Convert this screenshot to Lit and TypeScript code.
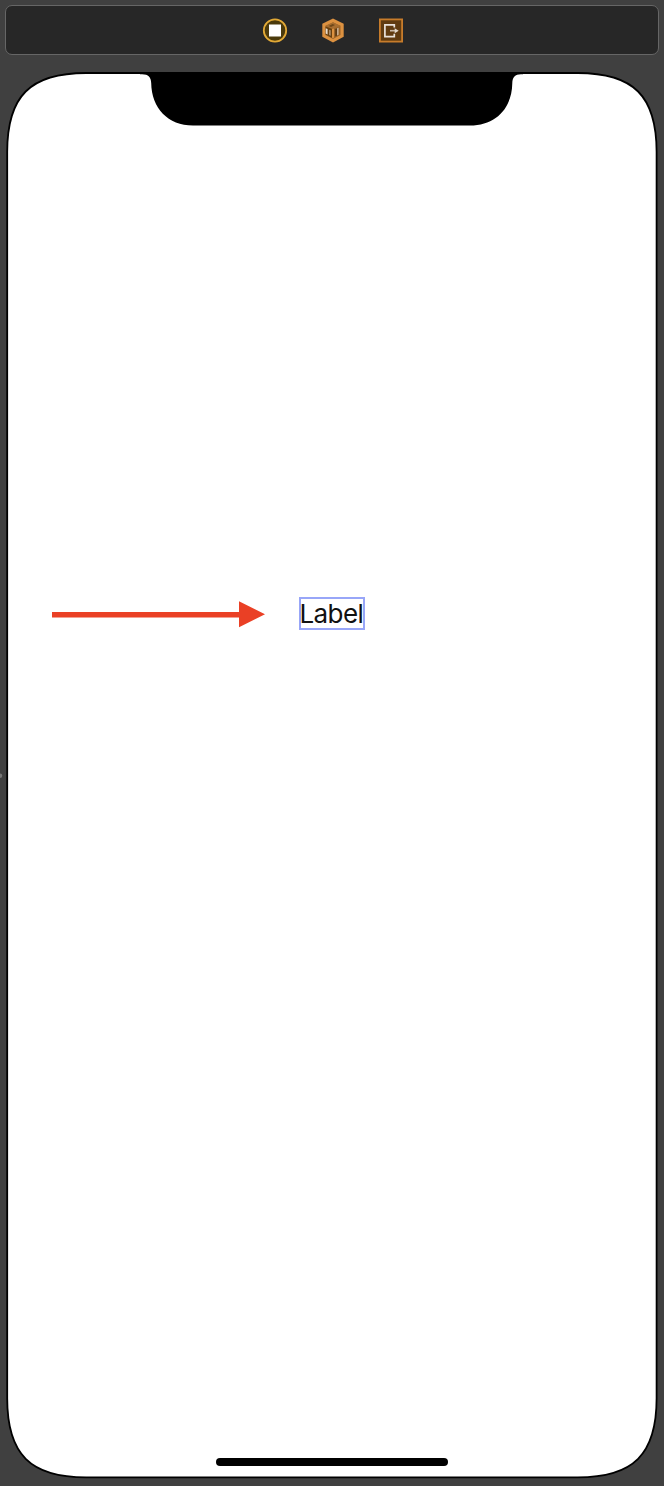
import { LitElement, html, css, svg } from "lit";
import { customElement } from "lit/decorators.js";

/** Outline of a rectangle whose corners ease into its sides: s is the corner's extent, k its handle. */
function smoothRect(x: number, y: number, w: number, h: number, s: number, k: number): string {
  const X = x + w, Y = y + h;
  return [
    `M${x + s} ${y}H${X - s}`,
    `C${X - k} ${y} ${X} ${y + k} ${X} ${y + s}V${Y - s}`,
    `C${X} ${Y - k} ${X - k} ${Y} ${X - s} ${Y}H${x + s}`,
    `C${x + k} ${Y} ${x} ${Y - k} ${x} ${Y - s}V${y + s}`,
    `C${x} ${y + k} ${x + k} ${y} ${x + s} ${y}Z`,
  ].join("");
}

@customElement("scene-dock")
class SceneDock extends LitElement {
  static styles = css`
    :host {
      display: flex;
      box-sizing: border-box;
      height: 50px;
      margin: 5px 5px 0;
      border: 1px solid #666;
      border-radius: 7px;
      background: #272727;
      align-items: center;
      justify-content: center;
      gap: 32px;
      padding-left: 2px;
    }
    svg { display: block; width: 26px; height: 26px; }
  `;
  render() {
    return html`
      <svg viewBox="0 0 26 26">
        <circle cx="13" cy="13.5" r="11.2" fill="#4b3a0c" stroke="#e2a936" stroke-width="1.8" />
        <rect x="7" y="7.5" width="12" height="12" fill="#fff" />
      </svg>
      <svg viewBox="0 0 26 26">
        <path d="M13 1.5 23.7 6.8V19.7L13 25.5 2.3 19.7V6.8Z" fill="#dc9140" />
        <path d="M13 5.2 20.5 8.7V18L13 22 5.5 18V8.7Z" fill="#9b6428" />
        <path d="M5.5 9 13 5.5 20.5 9 12.5 12Z" fill="#a86e30" />
        <path d="M5.5 9.5 12.3 12V21L5.5 17.4Z" fill="#68400f" />
        <path d="M5.7 11.2 7.6 12V17.6L5.7 16.6Z" fill="#e8dccf" />
        <path d="M9.2 12.7 10.6 13.2V18.8L9.2 18Z" fill="#b99c7d" />
        <path d="M12 12 14 11.4V20.7L12 21Z" fill="#dc9140" />
        <path d="M15.2 12.1 17.2 11.3V18.5L15.2 19.4Z" fill="#5c3a14" />
        <path d="M17.2 11.3 18.5 10.8V17.8L17.2 18.5Z" fill="#d5c1ac" />
        <path d="M8.6 8.9 12.6 7 15 8.1 11 9.9Z" fill="#6f4719" />
      </svg>
      <svg viewBox="0 0 26 26">
        <rect x="1.9" y="2.4" width="22.2" height="22.2" fill="#603b10" stroke="#c77c2b" stroke-width="1.8" />
        <path d="M16.3 10.6V7.8H6.9V19.7H16.3V16.8" fill="none" stroke="#e9e2da" stroke-width="1.7" />
        <path d="M12 13.7H17.5" stroke="#c9b8a5" stroke-width="1.6" />
        <path d="M16.7 11.2 20.7 13.7 16.7 16.2Z" fill="#e2d8cc" />
      </svg>
    `;
  }
}

@customElement("phone-canvas")
class PhoneCanvas extends LitElement {
  static styles = css`
    :host { display: grid; width: 664px; height: 1431px; }
    .shell, .screen { grid-area: 1 / 1; }
    .shell { display: block; width: 664px; height: 1431px; }
    .screen {
      display: grid;
      grid-template-rows: 542px 33px 1fr 20px;
      z-index: 1;
    }
    .row {
      grid-row: 2;
      display: grid;
      grid-template-columns: 213px 66px;
      column-gap: 34px;
      padding-left: 52px;
      align-items: center;
    }
    .arrow { display: block; width: 213px; height: 28px; }
    .label {
      box-sizing: border-box;
      width: 66px;
      height: 33px;
      border: 2px solid #98a6f8;
      color: #111;
      font: 400 26px/29px Inter, "Liberation Sans", sans-serif;
      letter-spacing: -0.6px;
      white-space: nowrap;
      text-indent: -1.5px;
    }
    .home {
      grid-row: 4;
      justify-self: center;
      width: 232px;
      height: 8px;
      margin-top: -8.5px;
      border-radius: 4px;
      background: #000;
    }
  `;
  render() {
    return html`
      <svg class="shell" viewBox="0 55 664 1431">
        ${svg`<path d=${smoothRect(7.2, 73, 649.4, 1404.3, 79, 23)} fill="#fff" stroke="#000" stroke-width="1.8" />`}
        <path d="M140 72.2H523V74.2H521C515 74.2 512.5 77 512.3 83C512 108 496 125.5 470 125.5H193C168 125.5 151.5 108 151.2 83C151 77 148.5 74.2 142 74.2H140Z" fill="#000" />
        <path d="M0 773.5A2.2 2.2 0 0 1 0 778Z" fill="#777" />
      </svg>
      <div class="screen">
        <div class="row">
          <svg class="arrow" viewBox="0 0 213 28">
            <path d="M0 12H187V1.2L213 14.2 187 27.2V17.5H0Z" fill="#ea4025" />
          </svg>
          <div class="label">Label</div>
        </div>
        <div class="home"></div>
      </div>
    `;
  }
}

@customElement("app-root")
class AppRoot extends LitElement {
  static styles = css`
    :host {
      display: flex;
      flex-direction: column;
      width: 664px;
      height: 1486px;
      overflow: hidden;
      background: #404040;
    }
  `;
  render() {
    return html`<scene-dock></scene-dock><phone-canvas></phone-canvas>`;
  }
}
